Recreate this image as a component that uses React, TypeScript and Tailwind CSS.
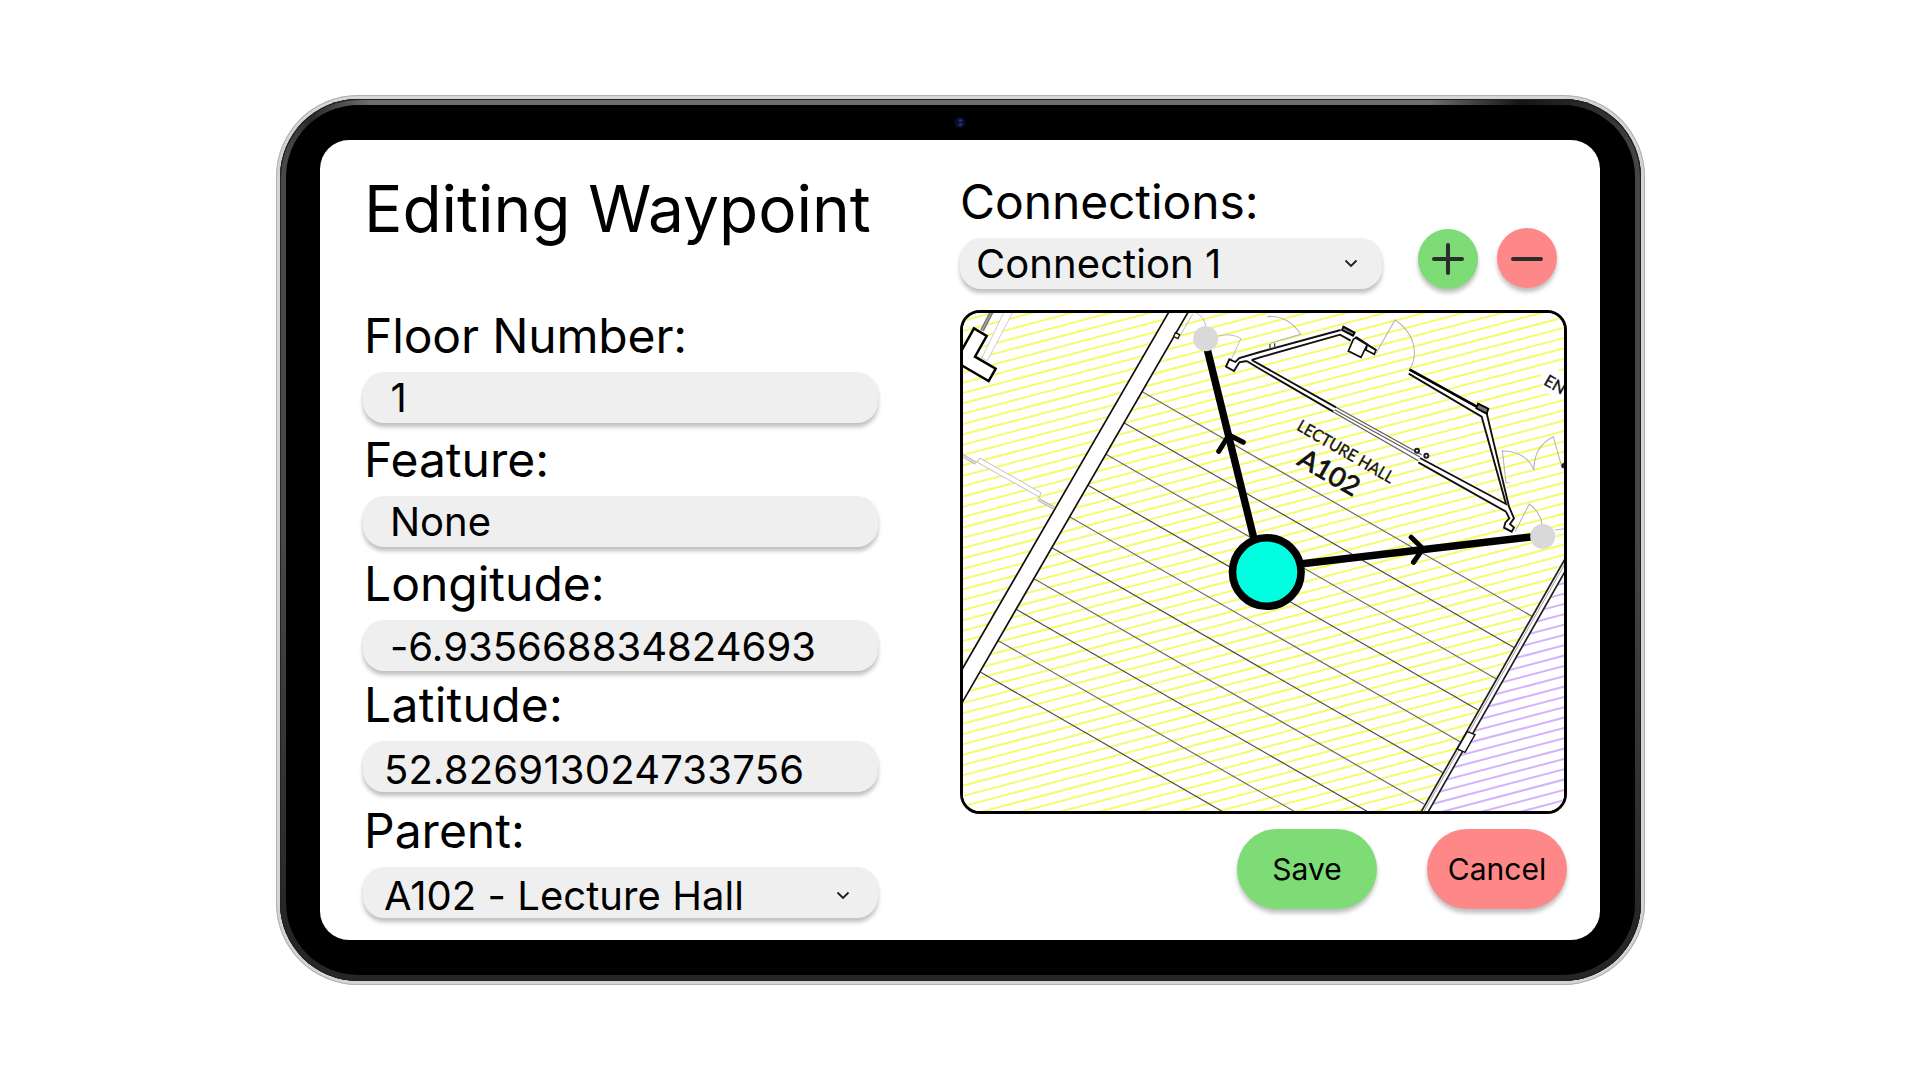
import React from "react";

type FieldProps = {
  label: string;
  value: string;
  className: string;
  labelClass?: string;
  inputClass: string;
  select?: boolean;
};

function Chevron() {
  return (
    <svg width="14" height="9" viewBox="0 0 14 9" fill="none" className="mb-[2px] shrink-0">
      <path d="M1.5 1.5 L7 7 L12.5 1.5" stroke="#1e1e1e" strokeWidth="1.8" />
    </svg>
  );
}

function Field({ label, value, className, labelClass = "", inputClass, select }: FieldProps) {
  return (
    <div className={className}>
      <div className={"pt-px pl-px text-[48px] leading-[58px] whitespace-nowrap " + labelClass}>{label}</div>
      <div
        className={
          "mt-[7px] ml-[0.4px] flex h-[50.5px] -mb-[0.5px] w-[514.6px] items-center justify-between rounded-[21px] bg-[#efefef] pr-7 text-[40px] leading-[50px] whitespace-nowrap shadow-[0_4px_4px_rgba(0,0,0,0.25)] " +
          inputClass
        }
      >
        <span>{value}</span>
        {select && <Chevron />}
      </div>
    </div>
  );
}

const stepStarts = [
  [1142.3, 391.7, 1532.7, 616.7],
  [1124.3, 423, 1514.3, 647.7],
  [1106, 454.3, 1496, 678.7],
  [1088, 485.3, 1477.7, 709.7],
  [1070, 517, 1460, 741.7],
  [1052, 547.7, 1442.7, 772.5],
  [1033.3, 578.3, 1424, 804],
  [1016.5, 609.5, 1370, 813],
  [998.3, 640.7, 1297, 813],
  [980.7, 672.3, 1225, 813],
];

const slope = 0.2635;
const hatch = (x0: number, y0: number) =>
  Array.from({ length: 100 }, (_, i) => {
    const y = y0 + (i - 50) * 10.33;
    return `M960 ${(y + (x0 - 960) * slope).toFixed(2)} L1567 ${(y - (1567 - x0) * slope).toFixed(2)}`;
  }).join(" ");

function FloorMap() {
  return (
    <svg viewBox="963 313 601 498" className="block h-full w-full" fill="none">
      <defs>
        <clipPath id="annex">
          <path d="M1570 562 L1428 811 H1570 Z" />
        </clipPath>
      </defs>
      <rect x="960" y="310" width="607" height="504" fill="#fff" />
      <path d={hatch(963, 713.3)} stroke="#f6fb6c" strokeWidth="2" />
      <path d="M1570 562 L1424 815 H1570 Z" fill="#fff" />
      <g clipPath="url(#annex)">
        <path d={hatch(1564, 604)} stroke="#d5b2fc" strokeWidth="2" />
      </g>

      {stepStarts.map(([x1, y1, x2, y2], i) => (
        <line key={i} x1={x1} y1={y1} x2={x2} y2={y2} stroke={i % 2 ? "#4a4a4a" : "#6c6c6c"} strokeWidth="1.2" />
      ))}

      <path d="M1170 310 L960 673 V706 L1189.3 310 Z" fill="#fff" />
      <path d="M1170 310 L960 673 M1189.3 310 L960 706.3" stroke="#111" strokeWidth="1.7" />

      <path d="M1565 559 L1420.5 813 H1428 L1565 573 Z" fill="#fff" />
      <path d="M1565 559 L1420.5 813 M1567 568 L1427.5 813" stroke="#222" strokeWidth="1.7" />
      <path d="M1566 562 L1423 813" stroke="#888" strokeWidth="0.8" />
      <path d="M1467.3 731.7 L1475 734.7 L1465 752.3 L1457.3 749 Z" fill="#fff" stroke="#111" strokeWidth="1.4" />

      <g transform="translate(950 300) scale(0.33333)">
        <path d="M165 30 L95 175 L112 182 L192 30 Z" fill="#fff" stroke="#ccc" strokeWidth="3" />
        <path d="M128 30 L96 92" stroke="#777" strokeWidth="12" />
        <path d="M128 30 L96 92" stroke="#bbb" strokeWidth="3" />
        <path d="M72 85 L110 108 L75 170 L137 206 L116 243 L30 193 V160 Z" fill="#fff" stroke="#000" strokeWidth="7.5" />
        <path d="M30 462 L78 490 M264 598 L312 624" stroke="#bbb" strokeWidth="10" />
        <path d="M30 462 L78 490 M264 598 L312 624" stroke="#eee" strokeWidth="3" />
        <path d="M89 474 L273 578 L268 591 L82 487 Z" fill="#fff" stroke="#c0c0c0" strokeWidth="3" />
        <path d="M728 42 L690 108 M735 36 Q765 50 768 85 M805 108 Q840 98 873 115 L838 190" stroke="#bcbcbc" strokeWidth="3" />
        <path d="M676 98 L689 104 L684 116 L671 110 Z" fill="#fff" stroke="#111" strokeWidth="4" />
        <path d="M953 52 L962 46" stroke="#c4c4c4" strokeWidth="3" />
      </g>

      <g transform="translate(1260 300) scale(0.33333)">
        <path
          d="M-102 200 L-92 180 L-74 186 L-62 175 L0 158 L240 90 L275 106 L272 120 L240 103 L0 172 L-25 180 L0 194 L740 610 L665 350 L447 220 L448 207 L650 320 L680 340 L762 655 L750 670 L762 683 L755 695 L732 683 L748 655 L740 637 L0 208 L-45 183 L-62 187 L-78 213 Z"
          fill="#fff"
        />
        <path
          d="M-40 183 L-62 187 L-78 213 L-102 200 L-92 178 L-74 186 L-62 174 L0 156 L242 90 M-25 180 L0 172 L240 104 L272 122 M-25 180 L0 194 L228 322 M-40 183 L0 207 L220 335 M480 474 L738 612 L665 350 L446 221 M475 487 L738 635 M448 208 L650 320 M680 340 L747 620 L762 655 L750 672 L762 683 L755 695 L732 683 L736 668 L748 655 L738 635"
          stroke="#111"
          strokeWidth="5.6"
        />
        <path d="M448 208 L650 320" stroke="#000" strokeWidth="8" />
        <path d="M228 322 L485 464 M224 329 L480 471 M220 336 L475 482" stroke="#5c5c5c" strokeWidth="3.6" />
        <path d="M250 80 L284 98 L279 107 L246 90 Z M654 311 L685 326 L680 341 L649 325 Z" fill="#777" stroke="#000" strokeWidth="5.5" />
        <path d="M290 112 L280 118 L265 153 L303 172 L322 133 Z M322 133 L348 150 L343 163 L318 150 Z" fill="#fff" stroke="#111" strokeWidth="5" />
        <path d="M285 112 L348 150" stroke="#111" strokeWidth="6" />
        <path
          d="M348 160 L405 60 Q465 100 463 165 Q460 195 448 208 M22 50 Q85 45 122 103 L30 130 M748 548 L738 548 L727 452 Q800 455 822 510 Q820 440 880 410 L905 500 M765 695 L808 612 Q845 640 846 680 M885 690 L915 686"
          stroke="#b4b4b4"
          strokeWidth="3.2"
        />
        <path d="M30 132 V146 M44 130 V144" stroke="#444" strokeWidth="4" />
        <circle cx="471" cy="452" r="6" fill="#fff" stroke="#222" strokeWidth="6" />
        <circle cx="499" cy="467" r="6" fill="#fff" stroke="#222" strokeWidth="6" />
        <circle cx="912" cy="497" r="8" fill="#222" />
        <g fill="#111" className="font-[Lato,sans-serif]">
          <path d="M840 200 L915 215 V300 L850 275 Z" fill="#fff" />
          <text transform="translate(107 388) rotate(30)" fontSize="50" textLength="327" lengthAdjust="spacingAndGlyphs" stroke="#111" strokeWidth="1">
            LECTURE HALL
          </text>
          <text transform="translate(108 492) rotate(30)" fontSize="80" textLength="198" lengthAdjust="spacingAndGlyphs" stroke="#111" strokeWidth="2.5">
            A102
          </text>
          <text transform="translate(848 252) rotate(30)" fontSize="49" stroke="#111" strokeWidth="1">
            EN
          </text>
        </g>
      </g>

      <path d="M1205.7 343 L1255 543 M1300 564 L1534 536.6" stroke="#000" strokeWidth="7.4" />
      <path d="M1218.7 451.3 L1229 435 L1243.3 442.3 M1411.2 537.2 L1423 548.8 L1413.5 562.3" stroke="#000" strokeWidth="5" strokeLinecap="round" />
      <circle cx="1205.7" cy="338.7" r="12.5" fill="#d9d9d9" />
      <circle cx="1542.7" cy="536.4" r="12.5" fill="#d9d9d9" />
      <circle cx="1266.8" cy="572" r="34.3" fill="#00ffe1" stroke="#000" strokeWidth="7.6" />
    </svg>
  );
}

const roundButton =
  "flex size-[60px] items-center justify-center rounded-full shadow-[0_4px_4px_rgba(0,0,0,0.25)] ";
const pillButton =
  "flex h-20 w-[140px] items-center justify-center rounded-[40px] text-[30px] text-black shadow-[0_4px_4px_rgba(0,0,0,0.25)] ";

export default function App() {
  return (
    <div className="flex h-[1080px] w-[1920px] items-center justify-center overflow-hidden bg-white font-[Inter,sans-serif] text-black">
      <div className="h-[890px] w-[1369px] rounded-[82px] bg-[#d3d5d3] p-[4px] shadow-[inset_0_0_0_1px_#b0b2b0]">
        <div className="h-full w-full rounded-[78px] bg-[linear-gradient(to_right,#484848_0,#484848_8px,#2a2a2a_30px,#6e6e6e_90px,#6e6e6e_1150px,#141414_1240px,#333_1330px,#484848_100%)] shadow-[inset_0_0_0_1px_#222]">
          <div className="h-full w-full rounded-[78px] bg-[linear-gradient(to_bottom,transparent_50%,#262626_calc(100%-60px))] p-[6px] shadow-[inset_0_0_0_1px_#222]">
            <div className="relative flex h-full w-full items-center justify-center rounded-[72px] bg-black">
              <div className="absolute top-[12px] left-1/2 flex size-[11px] -translate-x-1/2 flex-col items-center justify-center gap-px rounded-full bg-[#0a0c2c]">
                <div className="h-[3px] w-1 rounded-full bg-[#1f2f70]" />
                <div className="h-[3px] w-1 rounded-full bg-[#1f2f70]" />
              </div>
              <main className="flex h-[800px] w-[1280px] shrink-0 rounded-[29px] bg-white pl-[43px]">
                <section className="w-[597px] pt-[30px]">
                  <h1 className="pl-px text-[64px] leading-[78px] tracking-[-0.04px] whitespace-nowrap">Editing Waypoint</h1>
                  <Field label="Floor Number:" value="1" className="mt-[58px]" labelClass="tracking-[-0.15px]" inputClass="pl-[27px] pt-[2px]" />
                  <Field label="Feature:" value="None" className="mt-2" inputClass="pl-[26.5px] pt-[2px]" />
                  <Field label="Longitude:" value="-6.935668834824693" className="mt-2" inputClass="pl-[26.5px] pt-[3px] tracking-[0.05px]" />
                  <Field label="Latitude:" value="52.826913024733756" className="mt-[5px]" labelClass="tracking-[0.28px]" inputClass="pl-[20.5px] pt-[8px] tracking-[0.2px]" />
                  <Field label="Parent:" value="A102 - Lecture Hall" className="mt-[10px]" inputClass="pl-[20.5px] pt-[8px] tracking-[0.05px]" select />
                </section>
                <section className="flex w-[607px] flex-col pt-[35px]">
                  <h2 className="text-[48px] leading-[53px] tracking-[-0.1px] whitespace-nowrap">Connections:</h2>
                  <div className="flex h-[61px] items-start">
                    <div className="mt-[10px] -ml-[0.5px] flex h-[50.5px] w-[422.6px] items-center justify-between rounded-[21px] bg-[#efefef] pt-[2px] pr-6 pl-[16.5px] text-[40px] leading-[50px] tracking-[0.07px] shadow-[0_4px_4px_rgba(0,0,0,0.25)]">
                      <span>Connection 1</span>
                      <Chevron />
                    </div>
                    <button className={roundButton + "mt-px ml-[35.9px] bg-[#7ddc76]"}>
                      <svg width="34" height="34" viewBox="0 0 34 34" stroke="#2c2c2c" strokeWidth="4" strokeLinecap="round">
                        <path d="M17 3 V31 M3 17 H31" />
                      </svg>
                    </button>
                    <button className={roundButton + "ml-[19px] bg-[#fe8888]"}>
                      <svg width="34" height="34" viewBox="0 0 34 34" stroke="#2c2c2c" strokeWidth="4" strokeLinecap="round">
                        <path d="M3 18 H31" />
                      </svg>
                    </button>
                  </div>
                  <div className="mt-[21px] h-[504px] w-[607px] overflow-hidden rounded-[20px] border-[3px] border-black">
                    <FloorMap />
                  </div>
                  <div className="mt-[15px] flex justify-end gap-[50px]">
                    <button className={pillButton + "bg-[#7ddc76]"}>Save</button>
                    <button className={pillButton + "bg-[#fe8888]"}>Cancel</button>
                  </div>
                </section>
              </main>
            </div>
          </div>
        </div>
      </div>
    </div>
  );
}
